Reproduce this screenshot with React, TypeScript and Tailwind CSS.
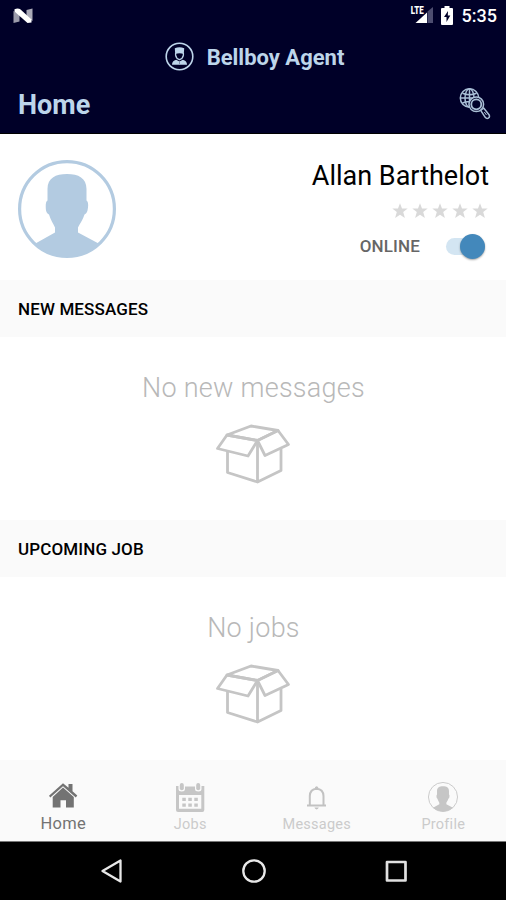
import type { ReactNode } from "react"

function NougatIcon() {
  return (
    <svg className="h-4 w-5" viewBox="0 0 20 16">
      <path d="M0.5 3 6.500 6v7.500L0.500 15z" fill="#9b9bab" />
      <path d="M13.500 2 19.500 0.500V13L13.500 9z" fill="#aaaab8" />
      <path d="M1.500 1.300Q4.500 0 7 1L18.500 11.500V14.500L14.500 15 1.500 3.500z" fill="#fff" />
    </svg>
  )
}

function SignalIcon() {
  return (
    <svg className="h-5 w-6" viewBox="0 0 24 20">
      <path d="M17.500 7.500 23 3V19H17.500z" fill="#4d4d70" />
      <path d="M5.500 19 17 8.500V19z" fill="#fff" />
      <text
        x="0.800"
        y="9.500"
        fontSize="10.500"
        fontWeight="900"
        textLength="13"
        lengthAdjust="spacingAndGlyphs"
        fill="#fff"
        stroke="#000028"
        strokeWidth="1.500"
        paintOrder="stroke"
      >
        LTE
      </text>
    </svg>
  )
}

function BatteryIcon() {
  return (
    <svg className="h-[19px] w-3" viewBox="0 0 12 19">
      <path d="M3.500 0h5v2H11a1 1 0 0 1 1 1v15a1 1 0 0 1-1 1H1a1 1 0 0 1-1-1V3a1 1 0 0 1 1-1h2.500z" fill="#fff" />
      <path d="M7 5 3 11h2.500v5L9.300 9.500H6.800z" fill="#000028" />
    </svg>
  )
}

function StatusBar() {
  return (
    <div className="flex h-8 items-center justify-between pr-[9px] pl-[13px]">
      <NougatIcon />
      <div className="flex items-center">
        <span className="-mt-1">
          <SignalIcon />
        </span>
        <span className="ml-[7px] -mt-px">
          <BatteryIcon />
        </span>
        <span className="ml-[9px] text-[18px] leading-none font-medium text-white">5:35</span>
      </div>
    </div>
  )
}

function AgentIcon() {
  return (
    <svg className="h-[29px] w-[29px]" viewBox="0 0 29 29">
      <circle cx="14.500" cy="14.500" r="13.300" fill="none" stroke="#bdd5ea" strokeWidth="1.600" />
      <path d="M9.800 6.300Q14.500 4.300 19.200 6.300L18.800 12Q14.500 10.600 10.200 12z" fill="#bdd5ea" />
      <path d="M10.600 11v2.200q.5 3.500 3.900 4.500 3.400-1 3.900-4.500V11" fill="none" stroke="#bdd5ea" strokeWidth="1.300" />
      <path d="M7 22.800q0-3.800 4.200-5l3.300 1.700 3.300-1.700q4.200 1.200 4.200 5z" fill="#bdd5ea" />
      <path d="M14.500 19.500v2.500" stroke="#6e7e9b" strokeWidth="0.800" />
    </svg>
  )
}

function GlobeSearchIcon() {
  return (
    <svg className="h-8 w-8" viewBox="0 0 32 32" fill="none" stroke="#a9bfd6" strokeWidth="1.500">
      <circle cx="10.500" cy="10" r="9.200" />
      <ellipse cx="10.500" cy="10" rx="4.500" ry="9.200" />
      <path d="M10.500 1v18M1.700 10h17.600M3.500 5.200q7 3 14 0M3.500 15q4-2 8-1.500" />
      <circle cx="17.300" cy="16.300" r="7.300" fill="#000028" />
      <circle cx="17.300" cy="16.300" r="5" fill="#000028" strokeWidth="1.800" />
      <path d="m21.700 22.500 3-2.500 5.300 6.700q1.200 2.300-.6 3.400-1.700 1-3.200-.8z" fill="#000028" />
      <path d="m25.300 24 2.200 3" strokeWidth="1" />
    </svg>
  )
}

function PersonIcon({ className, ring }: { className: string; ring: number }) {
  return (
    <svg className={className} viewBox="0 0 98 98">
      <circle cx="49" cy="49" r={49 - ring / 2} fill="none" stroke="currentColor" strokeWidth={ring} />
      <path
        d="M49 14C60.500 14 68.500 18 68.500 29V40.500C70.500 41.500 70.500 46 69.500 50.500 69 53 67.500 54 66.500 54.500 65 60 61.500 64 60 67.500V72.500L81.500 84A49 49 0 0 1 16.500 84L37 72.500V67.500C35.500 64 32.500 60 31 54.500 30 54 28.500 53 28 50.500 27.500 46 27.500 41.500 29.500 40.500V29C29.500 18 37.500 14 49 14z"
        fill="currentColor"
      />
    </svg>
  )
}

function Stars() {
  return (
    <div className="flex gap-[4px] text-[#d9d9d9]">
      {[1, 2, 3, 4, 5].map((n) => (
        <svg key={n} className="h-4 w-4" viewBox="0 0 16 16" fill="currentColor">
          <path d="m8 .3 2 5.200h5.700l-4.500 3.600 1.700 5.900L8 11.700 3.100 15l1.700-5.900L.3 5.500H6z" />
        </svg>
      ))}
    </div>
  )
}

function BoxIcon() {
  return (
    <svg
      className="h-[60px] w-[76px]"
      viewBox="0 0 76 60"
      fill="none"
      stroke="#c5c5c5"
      strokeWidth="2.800"
      strokeLinejoin="round"
    >
      <path d="M12 11 36 2 63 6.500 42.500 16.500z" />
      <path d="M12 11 2.500 24.500 33 32 42.500 16.500z" />
      <path d="M63 6.500 73.500 20.500 50 31.500 42.500 16.500z" />
      <path d="M12.500 28V48.500L42.500 58 66 46.500V25M42.500 17V58" />
    </svg>
  )
}

function Section({ title, empty }: { title: string; empty: string }) {
  return (
    <section>
      <h2 className="flex h-[57px] items-center bg-[#fafafa] px-[18px] pt-[3px] text-[17px] font-medium tracking-[0.13px] text-black">
        {title}
      </h2>
      <div className="flex h-[183px] flex-col items-center pt-[35px]">
        <p className="pl-px text-[27px] leading-8 font-light tracking-[0.25px] text-[#b8b8b8]">{empty}</p>
        <div className="mt-[20px]">
          <BoxIcon />
        </div>
      </div>
    </section>
  )
}

function HomeIcon() {
  return (
    <svg className="-mt-px mb-px h-[30px] w-[30px]" viewBox="0 0 30 30" fill="#737373">
      <path d="M1 14.700 15 2.300l5.500 4.500V3H24.500v7.300l4.800 4.200-1.500 2L15 5.300 2.300 16.600z" />
      <path d="M15 6.500 25.800 16V26.500H18v-7.300h-5.500V26.500H4.700V16z" />
    </svg>
  )
}

function CalendarIcon() {
  return (
    <svg className="h-[30px] w-[30px]" viewBox="0 0 30 30" fill="#c6c6c6">
      <path
        fillRule="evenodd"
        d="M1 4h2.500v3q0 2.500 3.200 2.500T10 7V4.500h10V7q0 2.500 3.300 2.500T26.500 7V4H29.300v24q0 2-2 2H3q-2 0-2-2zM4 13v13.800h22.300V13z"
      />
      <rect x="4.800" y="1" width="4" height="7.300" rx="2" />
      <rect x="21.200" y="1" width="4" height="7.300" rx="2" />
      <path d="M7.300 15.800h3.500v3.200H7.300zM13.300 15.800h3.500v3.200h-3.500zM19.300 15.800h3.500v3.200h-3.500zM7.300 21.500h3.500v3.200H7.300zM13.300 21.500h3.500v3.200h-3.500zM19.300 21.500h3.500v3.200h-3.500z" />
    </svg>
  )
}

function BellIcon() {
  return (
    <svg className="h-[30px] w-[30px]" viewBox="0 0 30 30">
      <path
        d="M6 23.500h19M8.800 23V14Q9 7.300 15.600 6.800 22.300 7.300 22.500 14v9"
        fill="none"
        stroke="#c2c2c2"
        strokeWidth="2"
      />
      <path d="M13.700 6.800q0-2.300 1.900-2.600 1.900.3 1.900 2.600zM13.400 25.500h4.400q-.5 1.800-2.200 1.900-1.700-.1-2.200-1.900z" fill="#c2c2c2" />
    </svg>
  )
}

function Tab({ label, icon, active }: { label: string; icon: ReactNode; active?: boolean }) {
  return (
    <div className="flex flex-1 flex-col items-center pt-[22px]">
      {icon}
      <span
        className={
          active
            ? "pt-px text-[16.500px] leading-[22px] tracking-[0.3px] text-[#737373]"
            : "pt-[3px] pl-px text-[14.500px] leading-5 tracking-[0.25px] text-[#cbcbcb]"
        }
      >
        {label}
      </span>
    </div>
  )
}

function SystemNav() {
  return (
    <div className="flex h-[59px] items-center justify-center gap-[118px] border-t border-[#777] bg-black pb-px pl-px">
      <svg className="h-6 w-6" viewBox="0 0 24 24" fill="none" stroke="#e8e8e8" strokeWidth="2.300" strokeLinejoin="round">
        <path d="M2.500 12 20.500 1.500V22.500z" />
      </svg>
      <svg className="h-6 w-6" viewBox="0 0 24 24" fill="none" stroke="#e8e8e8" strokeWidth="2.300">
        <circle cx="12" cy="12" r="10.700" />
      </svg>
      <svg className="h-6 w-6" viewBox="0 0 24 24" fill="none" stroke="#e0e0e0" strokeWidth="2.700" strokeLinejoin="round">
        <rect x="3" y="3" width="18.500" height="18.500" />
      </svg>
    </div>
  )
}

export default function App() {
  return (
    <div className="flex h-[900px] w-[506px] flex-col overflow-hidden bg-white font-['Roboto',sans-serif]">
      <header className="h-[134px] shrink-0 border-b border-black bg-[#000028] text-[#bdd5ea]">
        <StatusBar />
        <div className="flex h-[50px] items-center justify-center gap-[13px] pl-[3px]">
          <span className="-mt-0.5">
            <AgentIcon />
          </span>
          <span className="pt-px text-[22px] font-bold">Bellboy Agent</span>
        </div>
        <div className="flex h-[44px] items-center justify-between pr-[15px] pl-[18px]">
          <h1 className="pt-0.5 text-[27px] leading-8 font-bold">Home</h1>
          <GlobeSearchIcon />
        </div>
      </header>

      <main className="flex-1">
        <div className="flex h-[146px] justify-between pt-[26px] pr-[17px] pl-[18px]">
          <PersonIcon className="h-[98px] w-[98px] text-[#b3cbe1]" ring={3.2} />
          <div className="flex flex-col items-end">
            <span className="text-[27px] leading-8 text-black">Allan Barthelot</span>
            <div className="mt-[11px] pr-px">
              <Stars />
            </div>
            <div className="mt-[15px] flex items-center gap-[26px] pr-[4px]">
              <span className="text-[17px] leading-6 font-medium tracking-[0.15px] text-[#666]">ONLINE</span>
              <div className="flex h-[17px] w-[39px] items-center justify-end rounded-full bg-[#d3e5f2]">
                <div className="h-[25px] w-[25px] shrink-0 rounded-full bg-[#4388bb] shadow-[0_1px_2px_rgba(0,0,0,0.35)]" />
              </div>
            </div>
          </div>
        </div>
        <Section title="NEW MESSAGES" empty="No new messages" />
        <Section title="UPCOMING JOB" empty="No jobs" />
      </main>

      <nav className="flex h-[81px] shrink-0 bg-[#fafafa]">
        <Tab label="Home" icon={<HomeIcon />} active />
        <Tab label="Jobs" icon={<CalendarIcon />} />
        <Tab label="Messages" icon={<BellIcon />} />
        <Tab label="Profile" icon={<PersonIcon className="h-[30px] w-[30px] text-[#c6c6c6]" ring={3} />} />
      </nav>
      <SystemNav />
    </div>
  )
}
